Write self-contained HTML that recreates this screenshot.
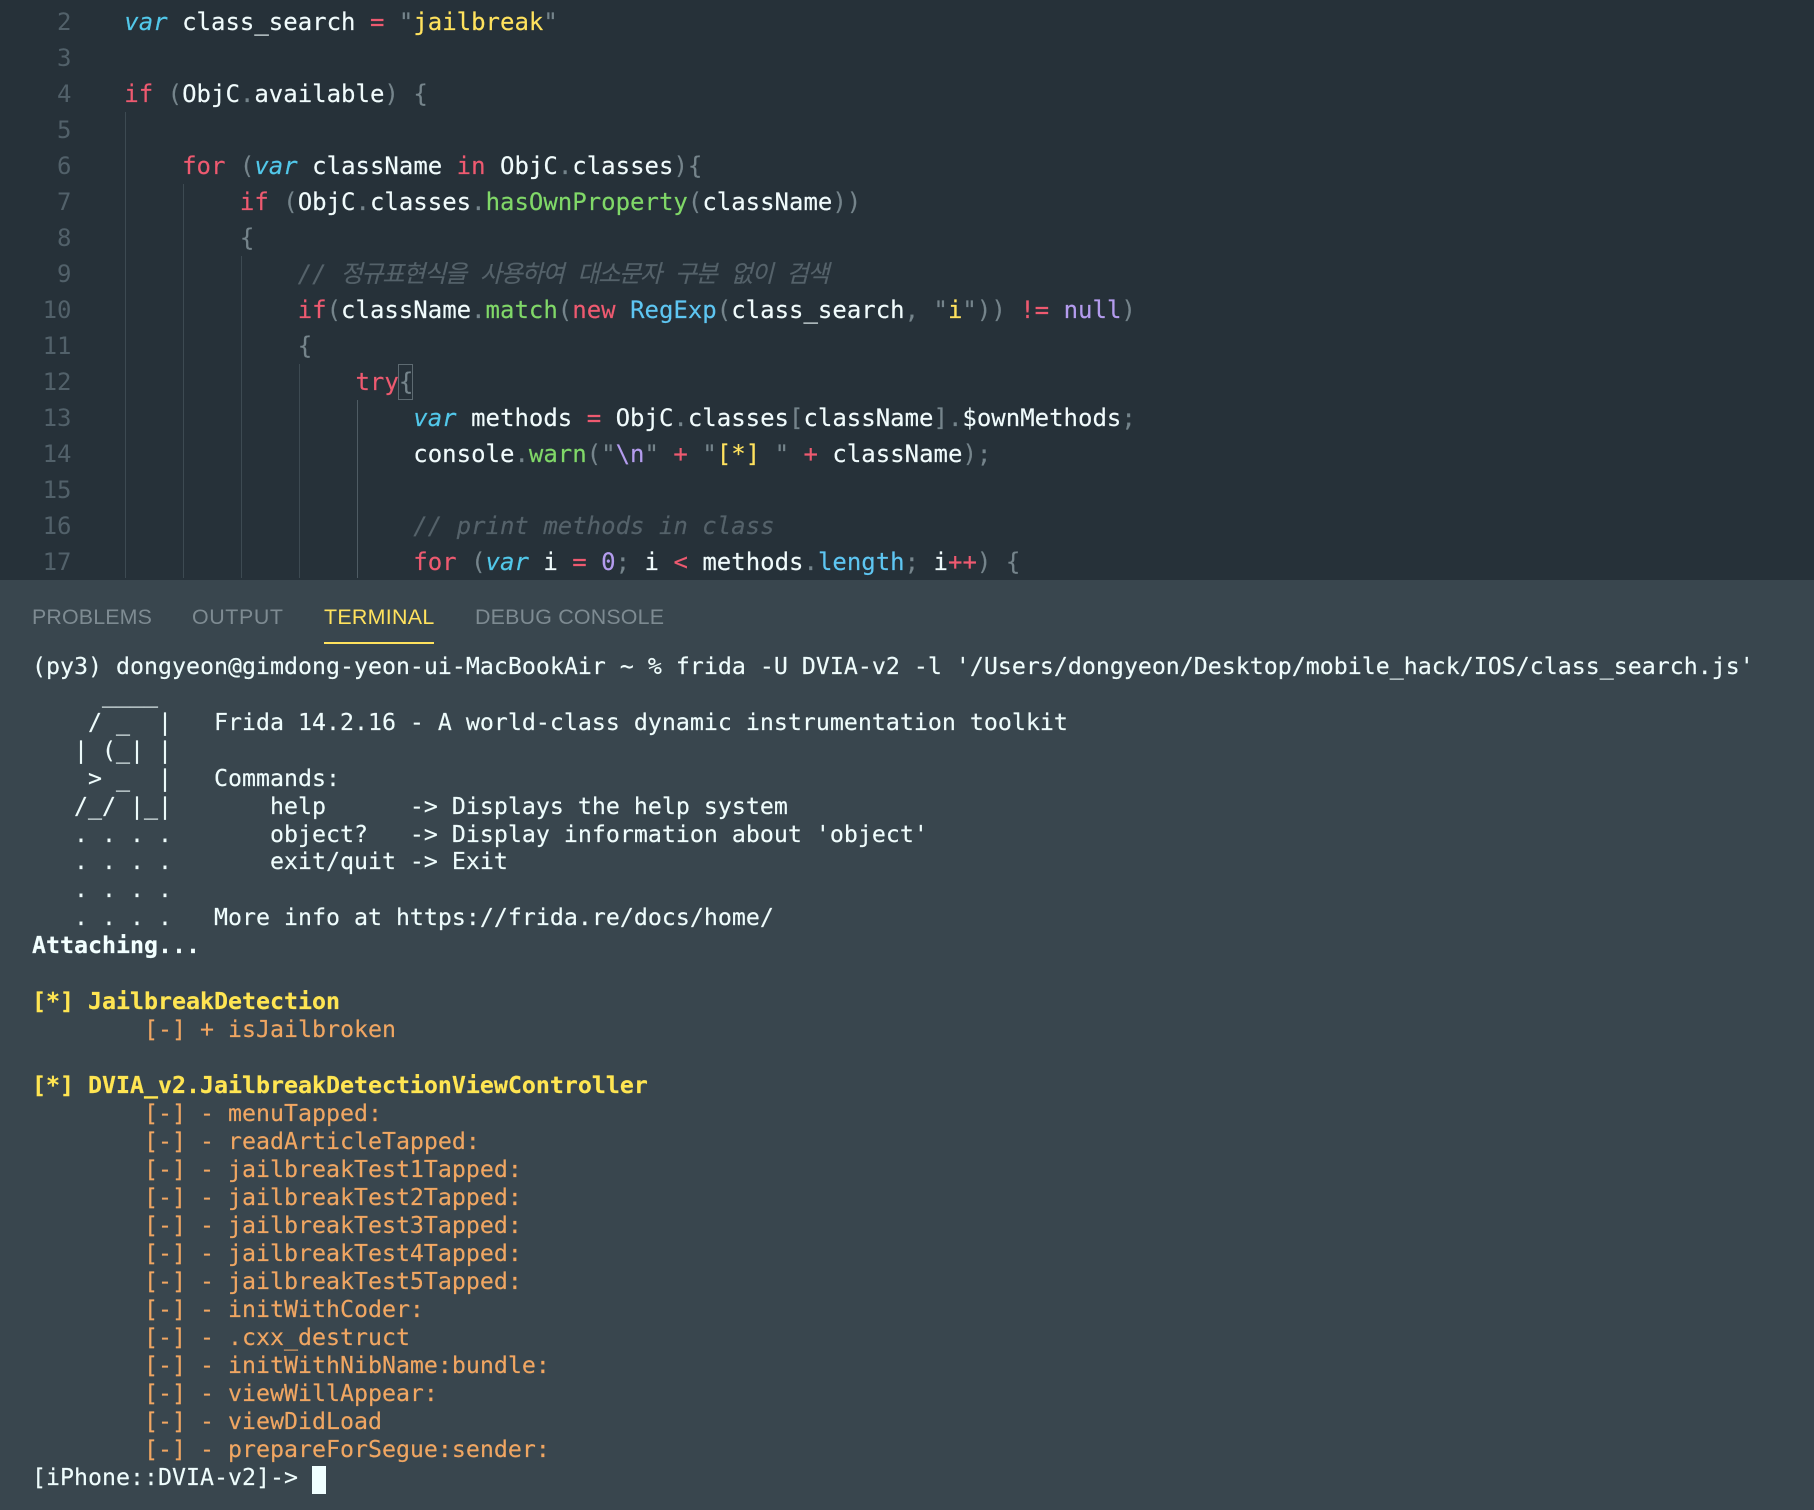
<!DOCTYPE html>
<html lang="ko"><head><meta charset="utf-8"><title>Terminal</title>
<style>
html,body{margin:0;padding:0;background:#263139}
#p{position:relative;width:1814px;height:1510px;overflow:hidden;background:#263139}
.m{font-family:"DejaVu Sans Mono","Noto Sans CJK KR",monospace;white-space:pre}
#ed{position:absolute;left:0;top:0;width:1814px;height:580px;background:#263139;overflow:hidden}
.l{position:absolute;left:124.3px;height:36px;line-height:36px;font-size:24px;color:#f0fbfc;-webkit-text-stroke:.15px currentColor}
.n{position:absolute;left:0;width:71.5px;text-align:right;height:36px;line-height:36px;font-size:24px;color:#52616a}
.g{position:absolute;width:1px;background:#3d4a52;bottom:2px}
.r{color:#ee5a70}.v{color:#52c8ea;font-style:italic}.y{color:#ffe25e}.u{color:#75848b}.h{color:#80d868}
.b{color:#5ec6f2}.c{color:#55626a;font-style:italic}.k{color:#b49cee}
.ko{letter-spacing:-1.22px;margin-left:-.4px}
#pn{position:absolute;left:0;top:580px;width:1814px;height:930px;background:#39464e}
.t{position:absolute;top:24px;height:26px;line-height:26px;font-family:"Liberation Sans",sans-serif;font-size:21.4px;color:#7e8b92}
#ul{position:absolute;left:324px;top:62px;width:110px;height:2px;background:#ffe25e}
#tm{position:absolute;left:32px;top:72.7px;margin:0;font-size:23.25px;line-height:27.97px;color:#eefcfc;-webkit-text-stroke:.15px currentColor}
.o{color:#f0a662}.w{color:#ffe552;font-weight:bold}.s{font-weight:bold;color:#f2ffff}
#cu{position:absolute;left:312px;top:886px;width:14px;height:28px;background:#f0ffff}
#br{position:absolute;left:398px;top:364px;width:13px;height:34px;border:1px solid #5d6a71}
</style></head><body><div id="p">
<div id="ed" class="m">
<div class="g" style="left:125px;top:112px"></div>
<div class="g" style="left:183px;top:184px"></div>
<div class="g" style="left:241px;top:256px"></div>
<div class="g" style="left:299px;top:364px"></div>
<div class="g" style="left:357px;top:400px;background:#4f5c64"></div>
<div id="br"></div>
<div class="n" style="top:4px">2</div><div class="l" style="top:4px"><span class="v">var</span> class_search <span class="r">=</span> <span class="u">"</span><span class="y">jailbreak</span><span class="u">"</span></div>
<div class="n" style="top:40px">3</div>
<div class="n" style="top:76px">4</div><div class="l" style="top:76px"><span class="r">if</span> <span class="u">(</span>ObjC<span class="u">.</span>available<span class="u">)</span> <span class="u">{</span></div>
<div class="n" style="top:112px">5</div>
<div class="n" style="top:148px">6</div><div class="l" style="top:148px">    <span class="r">for</span> <span class="u">(</span><span class="v">var</span> className <span class="r">in</span> ObjC<span class="u">.</span>classes<span class="u">){</span></div>
<div class="n" style="top:184px">7</div><div class="l" style="top:184px">        <span class="r">if</span> <span class="u">(</span>ObjC<span class="u">.</span>classes<span class="u">.</span><span class="h">hasOwnProperty</span><span class="u">(</span>className<span class="u">))</span></div>
<div class="n" style="top:220px">8</div><div class="l" style="top:220px">        <span class="u">{</span></div>
<div class="n" style="top:256px">9</div><div class="l" style="top:256px">            <span class="c">// <span class="ko">정규표현식을</span> <span class="ko">사용하여</span> <span class="ko">대소문자</span> <span class="ko">구분</span> <span class="ko">없이</span> <span class="ko">검색</span></span></div>
<div class="n" style="top:292px">10</div><div class="l" style="top:292px">            <span class="r">if</span><span class="u">(</span>className<span class="u">.</span><span class="h">match</span><span class="u">(</span><span class="r">new</span> <span class="b">RegExp</span><span class="u">(</span>class_search<span class="u">,</span> <span class="u">"</span><span class="y">i</span><span class="u">"))</span> <span class="r">!=</span> <span class="k">null</span><span class="u">)</span></div>
<div class="n" style="top:328px">11</div><div class="l" style="top:328px">            <span class="u">{</span></div>
<div class="n" style="top:364px">12</div><div class="l" style="top:364px">                <span class="r">try</span><span class="u">{</span></div>
<div class="n" style="top:400px">13</div><div class="l" style="top:400px">                    <span class="v">var</span> methods <span class="r">=</span> ObjC<span class="u">.</span>classes<span class="u">[</span>className<span class="u">].</span>$ownMethods<span class="u">;</span></div>
<div class="n" style="top:436px">14</div><div class="l" style="top:436px">                    console<span class="u">.</span><span class="h">warn</span><span class="u">("</span><span class="k">\n</span><span class="u">"</span> <span class="r">+</span> <span class="u">"</span><span class="y">[*]</span> <span class="u">"</span> <span class="r">+</span> className<span class="u">);</span></div>
<div class="n" style="top:472px">15</div>
<div class="n" style="top:508px">16</div><div class="l" style="top:508px">                    <span class="c">// print methods in class</span></div>
<div class="n" style="top:544px">17</div><div class="l" style="top:544px">                    <span class="r">for</span> <span class="u">(</span><span class="v">var</span> i <span class="r">=</span> <span class="k">0</span><span class="u">;</span> i <span class="r">&lt;</span> methods<span class="u">.</span><span class="b">length</span><span class="u">;</span> i<span class="r">++</span><span class="u">)</span> <span class="u">{</span></div>
</div>
<div id="pn">
<div class="t" style="left:32px;letter-spacing:.15px">PROBLEMS</div>
<div class="t" style="left:192px;letter-spacing:.6px">OUTPUT</div>
<div class="t" style="left:324px;color:#ffe25e;letter-spacing:.3px">TERMINAL</div>
<div class="t" style="left:475px;letter-spacing:.2px">DEBUG CONSOLE</div>
<div id="ul"></div>
<pre id="tm" class="m">(py3) dongyeon@gimdong-yeon-ui-MacBookAir ~ % frida -U DVIA-v2 -l '/Users/dongyeon/Desktop/mobile_hack/IOS/class_search.js'
     ____
    / _  |   Frida 14.2.16 - A world-class dynamic instrumentation toolkit
   | (_| |
    &gt; _  |   Commands:
   /_/ |_|       help      -&gt; Displays the help system
   . . . .       object?   -&gt; Display information about 'object'
   . . . .       exit/quit -&gt; Exit
   . . . .
   . . . .   More info at https://frida.re/docs/home/
<span class="s">Attaching...</span>

<span class="w">[*] JailbreakDetection</span>
<span class="o">        [-] + isJailbroken</span>

<span class="w">[*] DVIA_v2.JailbreakDetectionViewController</span>
<span class="o">        [-] - menuTapped:
        [-] - readArticleTapped:
        [-] - jailbreakTest1Tapped:
        [-] - jailbreakTest2Tapped:
        [-] - jailbreakTest3Tapped:
        [-] - jailbreakTest4Tapped:
        [-] - jailbreakTest5Tapped:
        [-] - initWithCoder:
        [-] - .cxx_destruct
        [-] - initWithNibName:bundle:
        [-] - viewWillAppear:
        [-] - viewDidLoad
        [-] - prepareForSegue:sender:</span>
[iPhone::DVIA-v2]-&gt; </pre>
<div id="cu"></div>
</div>
</div></body></html>
